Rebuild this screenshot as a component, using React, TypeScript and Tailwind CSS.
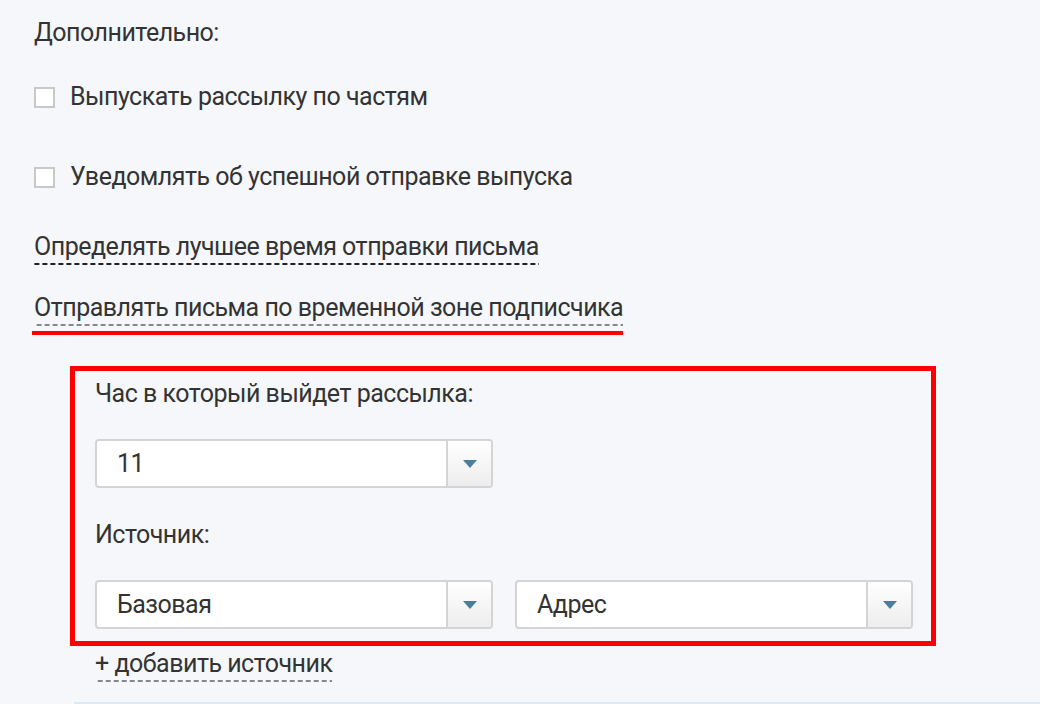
const font = { fontFamily: "Roboto, 'Noto Sans', sans-serif" };

function Checkbox({ label }: { label: string }) {
  return (
    <label className="flex items-center h-[32px]">
      <span className="w-[21px] h-[21px] border-2 border-[#c8c8c8] bg-white shrink-0" />
      <span className="ml-[15px] text-[#333]">{label}</span>
    </label>
  );
}

function Caret() {
  return (
    <svg width="14" height="8" viewBox="0 0 14 8">
      <path d="M0 0 H14 L7 8 Z" fill="#4e7d99" />
    </svg>
  );
}

function Select({ value }: { value: string }) {
  return (
    <div className="flex w-[398px] h-[49px] border-2 border-[#d4d4d4] rounded-[4px] bg-white overflow-hidden">
      <div className="flex-1 flex items-center pl-[20px] text-[#333]">{value}</div>
      <div className="w-[45px] flex items-center justify-center border-l-2 border-[#d4d4d4] bg-[linear-gradient(to_bottom,#ffffff,#ededed)]">
        <Caret />
      </div>
    </div>
  );
}

const dashBlack =
  "bg-[linear-gradient(to_right,#222_60%,transparent_0)] bg-[length:8px_2px] bg-repeat-x bg-bottom pb-[2px]";
const dashGray =
  "bg-[linear-gradient(to_right,#888_60%,transparent_0)] bg-[length:8px_2px] bg-repeat-x bg-bottom pb-[2px]";

export default function App() {
  return (
    <div
      className="h-[704px] bg-[#f5f7fa] text-[25px] leading-[32px] tracking-[-0.5px] text-[#333] pl-[34px] pt-[17px] overflow-hidden"
      style={font}
    >
      <div>Дополнительно:</div>

      <div className="mt-[32px]">
        <Checkbox label="Выпускать рассылку по частям" />
      </div>
      <div className="mt-[48px]">
        <Checkbox label="Уведомлять об успешной отправке выпуска" />
      </div>

      <div className="mt-[38px]">
        <span className={`inline-block ${dashBlack}`}>Определять лучшее время отправки письма</span>
      </div>

      <div className="mt-[27px]">
        <div className="inline-flex flex-col -ml-[2px] pl-[2px] pb-[5px] border-b-4 border-[#ff0000]">
          <span className={`inline-block ${dashGray}`}>Отправлять письма по временной зоне подписчика</span>
        </div>
      </div>

      <div className="mt-[31px] ml-[36px] w-[866px] border-[5px] border-[#ff0000] pt-[7px] pb-[12px] pl-[20px]">
        <div>Час в который выйдет рассылка:</div>
        <div className="mt-[29px]">
          <Select value="11" />
        </div>
        <div className="mt-[31px]">Источник:</div>
        <div className="mt-[29px] flex gap-[22px]">
          <Select value="Базовая" />
          <Select value="Адрес" />
        </div>
      </div>

      <div className="ml-[61px] mt-[2px]">
        <span className={`inline-block ${dashGray}`}>+ добавить источник</span>
      </div>

      <div className="ml-[40px] mt-[20px] h-[40px] border-t-2 border-[#dde9f6] bg-[#f8fbfe]" />
    </div>
  );
}
